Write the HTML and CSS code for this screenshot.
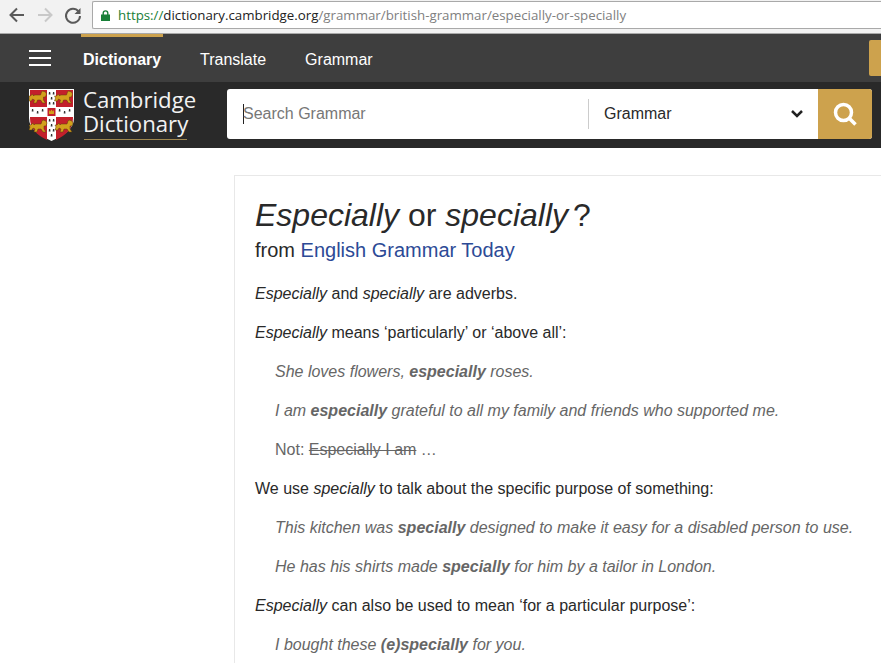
FILE: index.html
```html
<!DOCTYPE html>
<html>

<head>
    <title>Especially or specially</title>

    <link rel="stylesheet" href="styles.css">

</head>

<body>

    <div class="chrome">
        <svg class="nav-icon" width="20" height="20" viewBox="0 0 20 20"><path d="M17 10H4M10 3.500L3.500 10l6.500 6.500" fill="none" stroke="#5a5a5a" stroke-width="2"/></svg>
        <svg class="nav-icon" width="20" height="20" viewBox="0 0 20 20"><path d="M3 10h13M10 3.500l6.500 6.500-6.500 6.500" fill="none" stroke="#c9c9c9" stroke-width="2"/></svg>
        <svg class="nav-icon" width="20" height="20" viewBox="0 0 20 20"><path d="M15.500 6.500A7 7 0 1 0 17 11" fill="none" stroke="#5a5a5a" stroke-width="2"/><path d="M17.500 3v6h-6z" fill="#5a5a5a"/></svg>
        <div class="address">
            <svg width="9" height="11" viewBox="0 0 9 11"><path d="M2.200 5V3.200a2.300 2.300 0 0 1 4.600 0V5" fill="none" stroke="#188038" stroke-width="1.400"/><rect y="4.500" width="9" height="6.500" fill="#188038"/></svg>
            <span class="url"><span class="scheme">https://</span><span class="host">dictionary.cambridge.org</span>/grammar/british-grammar/especially-or-specially</span>
        </div>
    </div>

    <div class="topnav">
        <div class="burger"><i></i><i></i><i></i></div>
        <a class="tab active">Dictionary</a>
        <a class="tab">Translate</a>
        <a class="tab">Grammar</a>
        <div class="gold-btn"></div>
    </div>

    <div class="searchbar">
        <div class="logo">
            <svg width="45" height="52" viewBox="0 0 45 52">
                <defs>
                    <path id="lion" d="M0 6l2-2 1 2 1-1 6 0 1-3 1-1 3 1 1 2-1 3-2 0 0 3 2 3-3 0-2-3-3 0-1 3-3 0 1-3-2-1-1 2-3 0 1-3-1-2z"/>
                    <path id="tick" d="M0 0h1.200l.3 2.500H-.3z"/>
                </defs>
                <path d="M0 0h45v29c0 11-10 17-22.500 23C10 46 0 40 0 29z" fill="#fff"/>
                <path d="M1 1h17v17H1zM27 1h17v17H27zM1 28h17v23C8 46 1 40 1 29zM27 28h17v1c0 11-7 17-17 22z" fill="#c3202b"/>
                <g fill="#d3a01c" stroke="#5a3e0c" stroke-width=".5">
                    <use href="#lion" x="1.500" y="1"/>
                    <use href="#lion" x="27.500" y="1"/>
                    <use href="#lion" x="2" y="30"/>
                    <use href="#lion" x="28" y="30"/>
                </g>
                <rect x="18.500" y="19" width="8" height="8" fill="#c3202b"/>
                <path d="M20 21l1.200 1.500 1.300-2 1.300 2L25 21v4h-5z" fill="#d3a01c"/>
                <g fill="#333">
                    <use href="#tick" x="20" y="3"/>
                    <use href="#tick" x="24" y="3"/>
                    <use href="#tick" x="22" y="8"/>
                    <use href="#tick" x="20" y="13"/>
                    <use href="#tick" x="24" y="13"/>
                    <use href="#tick" x="20" y="30"/>
                    <use href="#tick" x="24" y="30"/>
                    <use href="#tick" x="22" y="35"/>
                    <use href="#tick" x="20" y="40"/>
                    <use href="#tick" x="24" y="40"/>
                    <use href="#tick" x="22" y="45"/>
                    <use href="#tick" x="3" y="20"/>
                    <use href="#tick" x="8" y="22"/>
                    <use href="#tick" x="13" y="20"/>
                    <use href="#tick" x="30" y="20"/>
                    <use href="#tick" x="35" y="22"/>
                    <use href="#tick" x="40" y="20"/>
                </g>
            </svg>
            <div class="wordmark">
                <div class="wordmark-text">Cambridge<br>Dictionary</div>
                <div class="wordmark-rule"></div>
            </div>
        </div>
        <div class="search">
            <div class="search-input"><span class="caret"></span>Search Grammar</div>
            <div class="search-scope">
                <span>Grammar</span>
                <svg width="14" height="10" viewBox="0 0 14 10"><path d="M2 2l5 5 5-5" fill="none" stroke="#222" stroke-width="2.500"/></svg>
            </div>
            <div class="search-btn">
                <svg width="26" height="26" viewBox="0 0 26 26"><circle cx="11.500" cy="11.500" r="8" fill="none" stroke="#fff" stroke-width="3.500"/><path d="M17.500 17.500l6 6" stroke="#fff" stroke-width="3.500"/></svg>
            </div>
        </div>
    </div>

    <div class="page">
        <div class="entry">
            <h1><em>Especially</em> or <em>specially</em><span class="qm">?</span></h1>
            <div class="from">from <a>English Grammar Today</a></div>

            <p><em>Especially</em> and <em>specially</em> are adverbs.</p>
            <p><em>Especially</em> means ‘particularly’ or ‘above all’:</p>
            <p class="eg">She loves flowers, <b>especially</b> roses.</p>
            <p class="eg">I am <b>especially</b> grateful to all my family and friends who supported me.</p>
            <p class="not">Not: <s>Especially I am</s> …</p>
            <p>We use <em>specially</em> to talk about the specific purpose of something:</p>
            <p class="eg">This kitchen was <b>specially</b> designed to make it easy for a disabled person to use.</p>
            <p class="eg">He has his shirts made <b>specially</b> for him by a tailor in London.</p>
            <p><em>Especially</em> can also be used to mean ‘for a particular purpose’:</p>
            <p class="eg">I bought these <b>(e)specially</b> for you.</p>
        </div>
    </div>

</body>

</html>
```

FILE: styles.css
```css
html {
    overflow: hidden;
}

body {
    margin: 0;
    height: 663px;
    overflow: hidden;
    background: #fff;
    font-family: "Liberation Sans", Arial, sans-serif;
    color: #292929;
}

.chrome {
    height: 34px;
    box-sizing: border-box;
    background: #f2f2f2;
    border-bottom: 1px solid #a9a9a9;
    display: flex;
    align-items: center;
    padding: 1px 0 4px 7px;
    gap: 8px;
}

.address {
    flex: 1;
    height: 28px;
    margin-left: 1px;
    box-sizing: border-box;
    background: #fff;
    border: 1px solid #a9a9a9;
    border-right: 0;
    border-radius: 2px 0 0 2px;
    display: flex;
    align-items: center;
    padding-left: 8px;
    gap: 8px;
    font-family: "Open Sans", sans-serif;
    font-size: 13.3px;
    color: #808080;
}

.scheme {
    color: #188038;
}

.host {
    color: #222;
}

.topnav {
    height: 48px;
    background: #3e3e3e;
    display: flex;
    align-items: center;
    color: #fff;
    font-size: 16px;
}

.burger {
    width: 22px;
    margin: 0 30px 0 29px;
    display: flex;
    flex-direction: column;
    gap: 5px;
}

.burger i {
    height: 2px;
    background: #fff;
}

.tab {
    height: 48px;
    line-height: 51px;
    box-sizing: border-box;
    padding: 0 2px;
    margin-right: 35px;
}

.tab.active {
    font-weight: bold;
    border-top: 3px solid #cda24d;
    line-height: 45px;
    width: 82px;
}

.gold-btn {
    margin-left: auto;
    width: 12px;
    height: 36px;
    background: #cda24d;
    border-radius: 2px 0 0 2px;
}

.searchbar {
    height: 66px;
    background: #292929;
    display: flex;
    align-items: center;
}

.logo {
    width: 227px;
    display: flex;
    padding-left: 29px;
    box-sizing: border-box;
    gap: 9px;
    color: #f2f2f2;
}

.wordmark-text {
    font-family: "Open Sans", sans-serif;
    font-size: 22.2px;
    line-height: 24px;
    margin-top: -1px;
    white-space: nowrap;
}

.wordmark-rule {
    height: 1px;
    width: 103px;
    margin: 3px 0 0 1px;
    background: #a08850;
}

.search {
    width: 645px;
    height: 50px;
    margin-bottom: 2px;
    background: #fff;
    border-radius: 3px;
    display: flex;
    align-items: center;
    overflow: hidden;
    font-size: 16px;
}

.search-input {
    flex: 1;
    display: flex;
    align-items: center;
    padding-left: 16px;
    color: #777;
}

.caret {
    width: 1px;
    height: 20px;
    margin-right: -1px;
    background: #222;
}

.search-scope {
    width: 230px;
    height: 30px;
    box-sizing: border-box;
    border-left: 1px solid #ccc;
    display: flex;
    align-items: center;
    justify-content: space-between;
    padding: 0 14px 0 15px;
    color: #292929;
}

.search-btn {
    width: 54px;
    height: 50px;
    background: #cda24d;
    display: flex;
    align-items: center;
    justify-content: center;
}

.page {
    padding: 27px 0 0 234px;
}

.entry {
    border: 1px solid #e8e8e8;
    border-right: 0;
    padding: 20px 0 0 20px;
    font-size: 16px;
}

h1 {
    margin: 0;
    font-size: 32px;
    font-weight: normal;
    line-height: 38px;
}

.qm {
    margin-left: 5px;
}

.from {
    font-size: 20px;
    line-height: 32px;
    margin-bottom: 19px;
}

.from a {
    color: #2c4a96;
}

p {
    margin: 0 0 21px;
    line-height: 18px;
    white-space: nowrap;
}

.eg {
    padding-left: 20px;
    font-style: italic;
    color: #666;
}

.not {
    padding-left: 20px;
    color: #666;
}
```
